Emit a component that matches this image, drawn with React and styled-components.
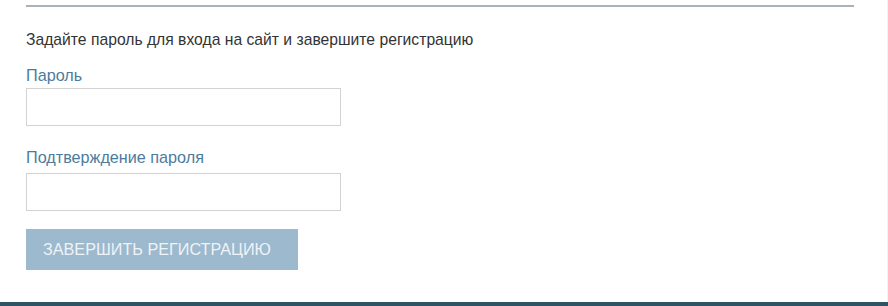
import React from "react";
import styled, { createGlobalStyle } from "styled-components";

const Global = createGlobalStyle`
  html, body { margin: 0; padding: 0; background: #ffffff; }
  body { font-family: "Liberation Sans", Arial, sans-serif; }
  * { box-sizing: border-box; }
`;

const Page = styled.div`
  width: 888px;
  height: 306px;
  display: flex;
  flex-direction: column;
  background: #ffffff;
  overflow: hidden;
`;

const Panel = styled.div`
  flex: 1;
  padding: 5px 33px 0 26px;
  display: flex;
  flex-direction: column;
  border-right: 1px solid #f1f3f4;
`;

const Divider = styled.div`
  height: 2px;
  background: #a7b2b9;
`;

const Intro = styled.p`
  margin: 25px 0 0;
  font-size: 15.7px;
  line-height: 16px;
  color: #333333;
`;

const Field = styled.div`
  display: flex;
  flex-direction: column;
  margin-top: ${(p) => p.$top}px;
`;

const Label = styled.label`
  font-size: 16.2px;
  line-height: 19px;
  color: #4d7b9d;
`;

const Input = styled.input`
  margin-top: ${(p) => p.$gap}px;
  width: 315px;
  height: ${(p) => p.$h}px;
  border: 1px solid #d3d3d3;
  background: #ffffff;
  outline: none;
  padding: 0 8px;
  font-family: inherit;
  font-size: 14px;
`;

const Submit = styled.button`
  margin-top: 18px;
  width: 272px;
  height: 41px;
  border: none;
  background: #9cb9ce;
  color: #eef3f7;
  font-family: "Liberation Sans", Arial, sans-serif;
  font-size: 16.2px;
  text-transform: uppercase;
  text-align: left;
  padding: 0 0 0 17px;
  cursor: default;
`;

const FooterBar = styled.div`
  height: 4px;
  background: #2d5364;
`;

export default function App() {
  return (
    <>
      <Global />
      <Page>
        <Panel>
          <Divider />
          <Intro>Задайте пароль для входа на сайт и завершите регистрацию</Intro>
          <Field $top={18}>
            <Label>Пароль</Label>
            <Input type="password" $gap={3} $h={38} />
          </Field>
          <Field $top={22}>
            <Label>Подтверждение пароля</Label>
            <Input type="password" $gap={6} $h={38} />
          </Field>
          <Submit type="button">Завершить регистрацию</Submit>
        </Panel>
        <FooterBar />
      </Page>
    </>
  );
}
